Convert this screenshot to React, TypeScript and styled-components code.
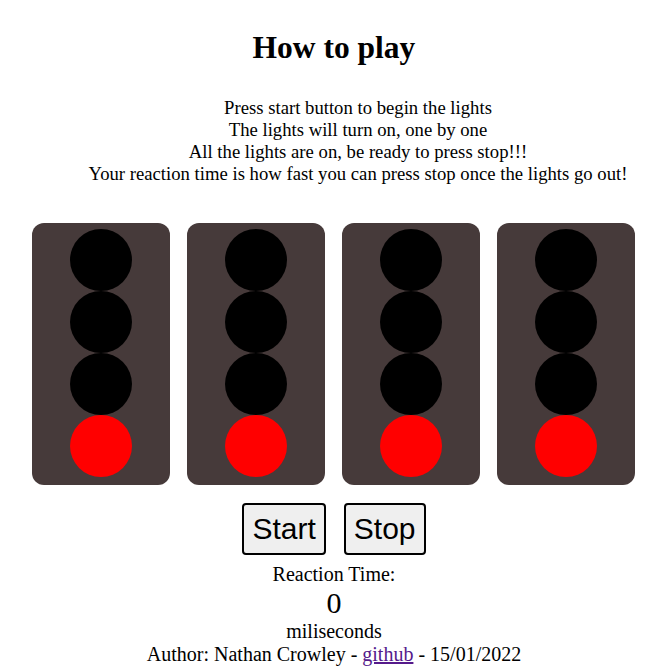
import React from "react";
import styled, { createGlobalStyle } from "styled-components";

const Global = createGlobalStyle`
  html, body { margin: 0; padding: 0; background: #ffffff; }
  body { font-family: "Liberation Serif", "Times New Roman", serif; color: #000; }
`;

const Page = styled.div`
  padding: 8px;
  display: flex;
  flex-direction: column;
  align-items: center;
`;

const Title = styled.h1`
  font-size: 31.5px;
  font-weight: bold;
  margin: 21px 0 0;
  line-height: 37px;
  text-align: center;
`;

const Instructions = styled.div`
  margin-top: 31px;
  padding-left: 48px;
  font-size: 18.7px;
  line-height: 22px;
  text-align: center;
`;

const Line = styled.div``;

const Lights = styled.div`
  margin-top: 38px;
  margin-right: 1px;
  display: flex;
  gap: 17px;
`;

const Light = styled.div`
  width: 138px;
  height: 262px;
  box-sizing: border-box;
  padding-top: 6px;
  background: #463a3a;
  border-radius: 12px;
  display: flex;
  flex-direction: column;
  align-items: center;
`;

const Bulb = styled.div<{ $on: boolean }>`
  width: 62px;
  height: 62px;
  border-radius: 50%;
  background: ${(p) => (p.$on ? "#ff0000" : "#000000")};
`;

const Buttons = styled.div`
  margin-top: 18px;
  margin-bottom: 8px;
  display: flex;
  gap: 18px;
`;

const Button = styled.button`
  font-family: "Liberation Sans", Arial, sans-serif;
  font-size: 30px;
  height: 52px;
  padding: 0 8px;
  background: #efefef;
  border: 2px solid #000;
  border-radius: 4px;
  color: #000;
`;

const Label = styled.div<{ $size?: number }>`
  font-size: ${(p) => p.$size ?? 20}px;
  line-height: ${(p) => (p.$size ? 34 : 23)}px;
  text-align: center;
`;

const Link = styled.a`
  color: #551a8b;
  text-decoration: underline;
`;

export default function App() {
  const lights = [0, 1, 2, 3];
  return (
    <>
      <Global />
      <Page>
        <Title>How to play</Title>
        <Instructions>
          <Line>Press start button to begin the lights</Line>
          <Line>The lights will turn on, one by one</Line>
          <Line>All the lights are on, be ready to press stop!!!</Line>
          <Line>Your reaction time is how fast you can press stop once the lights go out!</Line>
        </Instructions>
        <Lights>
          {lights.map((i) => (
            <Light key={i}>
              <Bulb $on={false} />
              <Bulb $on={false} />
              <Bulb $on={false} />
              <Bulb $on={true} />
            </Light>
          ))}
        </Lights>
        <Buttons>
          <Button>Start</Button>
          <Button>Stop</Button>
        </Buttons>
        <Label>Reaction Time:</Label>
        <Label $size={30}>0</Label>
        <Label>miliseconds</Label>
        <Label>
          Author: Nathan Crowley - <Link href="#">github</Link> - 15/01/2022
        </Label>
      </Page>
    </>
  );
}
